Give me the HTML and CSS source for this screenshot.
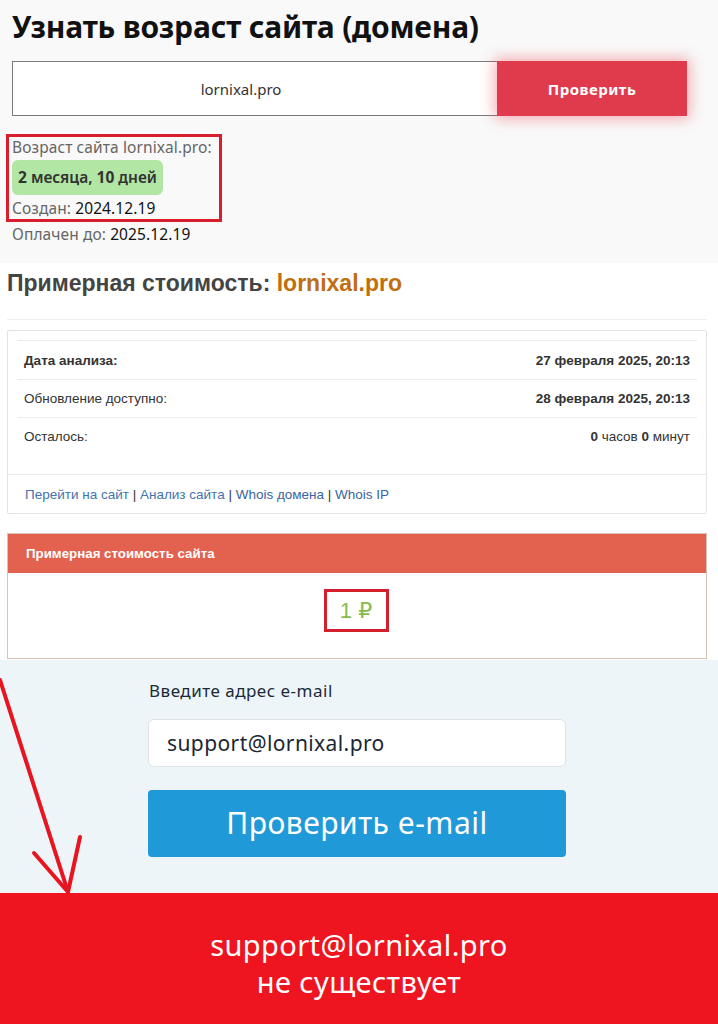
FILE: index.html
```html
<!DOCTYPE html>
<html lang="ru">
<head>
<meta charset="utf-8">
<title>Возраст сайта</title>
<link rel="stylesheet" href="styles.css">
</head>
<body>
<div class="page">
  <section class="age">
    <h1 class="age-title">Узнать возраст сайта (домена)</h1>
    <div class="age-form">
      <div class="age-input">lornixal.pro</div>
      <div class="age-btn">Проверить</div>
    </div>
    <div class="age-result">
      <div class="age-line">Возраст сайта lornixal.pro:</div>
      <div class="age-pill"><b>2</b> месяца, <b>10</b> дней</div>
      <div class="age-line">Создан: <span class="val">2024.12.19</span></div>
    </div>
    <div class="age-line age-paid">Оплачен до: <span class="val">2025.12.19</span></div>
  </section>

  <section class="cost">
    <h2 class="cost-title">Примерная стоимость: <span class="domain">lornixal.pro</span></h2>
    <div class="cost-rule"></div>
    <div class="panel">
      <div class="panel-body">
        <div class="row"><span class="k strong">Дата анализа:</span><span class="v strong">27 февраля 2025, 20:13</span></div>
        <div class="row"><span class="k">Обновление доступно:</span><span class="v strong">28 февраля 2025, 20:13</span></div>
        <div class="row"><span class="k">Осталось:</span><span class="v"><b>0</b> часов <b>0</b> минут</span></div>
      </div>
      <div class="panel-foot">
        <span class="lnk">Перейти на сайт</span> | <span class="lnk">Анализ сайта</span> | <span class="lnk dark">Whois домена</span> | <span class="lnk dark">Whois IP</span>
      </div>
    </div>
    <div class="price">
      <div class="price-head">Примерная стоимость сайта</div>
      <div class="price-body"><span class="price-val">1 ₽</span></div>
    </div>
  </section>

  <section class="mail">
    <div class="mail-form">
      <div class="mail-label">Введите адрес e-mail</div>
      <div class="mail-input">support@lornixal.pro</div>
      <div class="mail-btn">Проверить e-mail</div>
    </div>
  </section>

  <section class="alert">
    <div>support@lornixal.pro</div>
    <div>не существует</div>
  </section>

  <svg class="arrow" width="718" height="1024" viewBox="0 0 718 1024" aria-hidden="true">
    <g stroke="#e8141f" stroke-width="4" stroke-linecap="round" fill="none">
      <line x1="0" y1="680" x2="68" y2="892"/>
      <line x1="34" y1="853" x2="68" y2="892"/>
      <line x1="80" y1="837" x2="68" y2="892"/>
    </g>
  </svg>
</div>
</body>
</html>
```

FILE: styles.css
```css
* { box-sizing: border-box; }
body { margin: 0; background: #fff; }
.page { position: relative; width: 718px; height: 1024px; overflow: hidden; }

/* section 1 */
.age {
  background: #f9f9f9;
  height: 263px;
  padding: 7px 12px 0;
  font-family: "Noto Sans", "Open Sans", sans-serif;
}
.age-title {
  margin: 0;
  font-size: 30px;
  line-height: 40px;
  font-weight: 700;
  color: #111;
  letter-spacing: -0.2px;
}
.age-form {
  display: flex;
  margin-top: 14px;
  width: 675px;
  height: 55px;
}
.age-input {
  flex: 0 0 485px;
  background: #fff;
  border: 1px solid #7a7a7a;
  border-right: none;
  display: flex;
  align-items: center;
  justify-content: center;
  padding-right: 28px;
  font-size: 15px;
  color: #333;
}
.age-btn {
  flex: 1;
  background: #df3b4c;
  color: #fff;
  font-weight: 700;
  font-size: 15px;
  letter-spacing: 0.5px;
  display: flex;
  align-items: center;
  justify-content: center;
  box-shadow: 0 0 14px 2px rgba(232, 60, 76, 0.45);
}
.age-result {
  margin: 18px 0 0 -6px;
  width: 216px;
  height: 88px;
  border: 3px solid #d81e2d;
  padding: 0 3px;
}
.age-line {
  font-size: 15.5px;
  line-height: 20px;
  color: #666;
  letter-spacing: 0.1px;
}
.age-line .val { color: #111; }
.age-pill {
  display: inline-block;
  background: #b1e6a4;
  border-radius: 6px;
  height: 35px;
  line-height: 35px;
  padding: 0 6px;
  font-size: 15.5px;
  font-weight: 600;
  color: #333;
  margin: 3px 0 3px;
}
.age-pill b { font-weight: 700; }
.age-paid { line-height: 24px; }

/* section 2 */
.cost {
  background: #fff;
  height: 397px;
  padding: 0 11px 0 7px;
  font-family: "Liberation Sans", Arial, "DejaVu Sans", sans-serif;
}
.cost-title {
  margin: 0;
  padding-top: 5px;
  font-size: 23px;
  line-height: 30px;
  font-weight: 700;
  color: #444;
}
.cost-title .domain { color: #bf6e10; }
.cost-rule { margin-top: 21px; height: 1px; background: #efefef; }
.panel {
  margin-top: 10px;
  border: 1px solid #e3e3e3;
  border-radius: 2px;
}
.panel-body { padding: 9px 9px 19px; }
.row {
  display: flex;
  justify-content: space-between;
  align-items: center;
  height: 38px;
  border-top: 1px solid #ececec;
  padding: 0 7px;
  font-size: 13.5px;
  color: #333;
}
.row:first-child { height: 39px; }
.strong { font-weight: 700; }
.row b { font-weight: 700; }
.panel-foot {
  border-top: 1px solid #ececec;
  height: 39px;
  display: flex;
  align-items: center;
  padding-left: 17px;
  font-size: 13.5px;
  color: #333;
  white-space: pre;
}
.lnk { color: #4473ad; }
.lnk.dark { color: #3a64a2; }
.price {
  margin-top: 19px;
  border: 1px solid #dcc1b7;
}
.price-head {
  background: #e2614f;
  height: 39px;
  display: flex;
  align-items: center;
  padding-left: 18px;
  color: #fff;
  font-weight: 700;
  font-size: 13.3px;
}
.price-body {
  height: 85px;
  display: flex;
  justify-content: center;
  padding-top: 16px;
  padding-right: 2px;
}
.price-val {
  display: inline-flex;
  align-items: center;
  justify-content: center;
  width: 65px;
  height: 43px;
  border: 3px solid #d31f2e;
  color: #86bb4b;
  font-size: 22px;
  font-weight: 400;
}

/* section 3 */
.mail {
  background: #eef5f9;
  height: 233px;
  padding: 19px 0 0 148px;
  font-family: "Noto Sans", "Open Sans", sans-serif;
}
.mail-form { width: 418px; }
.mail-label {
  font-size: 17px;
  line-height: 24px;
  letter-spacing: 0.5px;
  color: #1c2a38;
  padding-left: 1px;
}
.mail-input {
  margin-top: 16px;
  height: 48px;
  background: #fff;
  border: 1px solid #dfe3e6;
  border-radius: 6px;
  display: flex;
  align-items: center;
  padding-left: 18px;
  font-size: 21px;
  letter-spacing: 0.4px;
  color: #1b2733;
}
.mail-btn {
  margin-top: 23px;
  height: 67px;
  background: #1f99d7;
  border-radius: 4px;
  display: flex;
  align-items: center;
  justify-content: center;
  color: #fff;
  font-size: 30px;
  font-weight: 400;
  letter-spacing: 0.5px;
  padding-bottom: 2px;
}

/* section 4 */
.alert {
  background: #ef1520;
  height: 131px;
  padding-top: 33px;
  text-align: center;
  color: #fff;
  font-family: "Noto Sans", "Open Sans", sans-serif;
  font-size: 29px;
  line-height: 37px;
  letter-spacing: 0.4px;
}

.arrow { position: absolute; left: 0; top: 0; pointer-events: none; }
```
